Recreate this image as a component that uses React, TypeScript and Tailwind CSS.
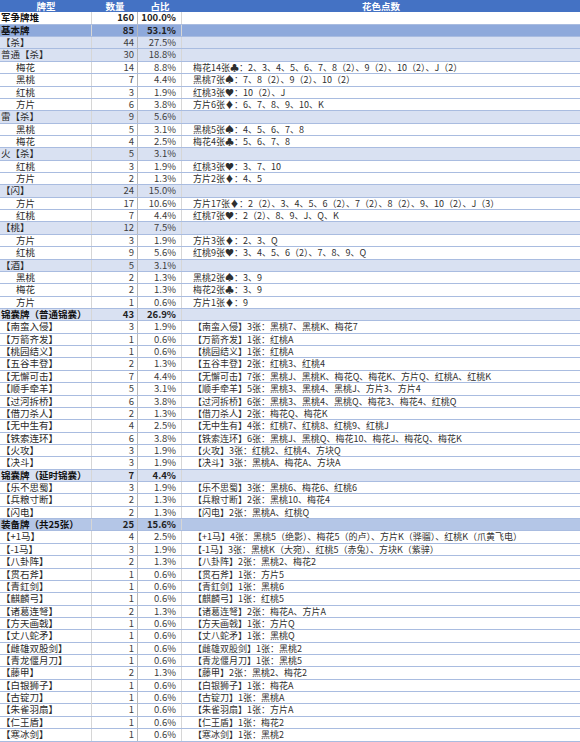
// 军争牌堆统计表：Excel 风格的牌型 / 数量 / 占比 / 花色点数表格
type Kind = "top" | "main" | "group" | "sub" | "item" | "equip";

type Row = {
  label: string;
  count: number;
  pct: string;
  detail?: string;
  kind: Kind;
};

const rows: Row[] = [
  { label: "军争牌堆", count: 160, pct: "100.0%", kind: "top" },
  { label: "基本牌", count: 85, pct: "53.1%", kind: "main" },
  { label: "【杀】", count: 44, pct: "27.5%", kind: "group" },
  { label: "普通【杀】", count: 30, pct: "18.8%", kind: "group" },
  { label: "梅花", count: 14, pct: "8.8%", detail: "梅花14张♣：2、3、4、5、6、7、8（2）、9（2）、10（2）、J（2）", kind: "sub" },
  { label: "黑桃", count: 7, pct: "4.4%", detail: "黑桃7张♠：7、8（2）、9（2）、10（2）", kind: "sub" },
  { label: "红桃", count: 3, pct: "1.9%", detail: "红桃3张♥：10（2）、J", kind: "sub" },
  { label: "方片", count: 6, pct: "3.8%", detail: "方片6张♦：6、7、8、9、10、K", kind: "sub" },
  { label: "雷【杀】", count: 9, pct: "5.6%", kind: "group" },
  { label: "黑桃", count: 5, pct: "3.1%", detail: "黑桃5张♠：4、5、6、7、8", kind: "sub" },
  { label: "梅花", count: 4, pct: "2.5%", detail: "梅花4张♣：5、6、7、8", kind: "sub" },
  { label: "火【杀】", count: 5, pct: "3.1%", kind: "group" },
  { label: "红桃", count: 3, pct: "1.9%", detail: "红桃3张♥：3、7、10", kind: "sub" },
  { label: "方片", count: 2, pct: "1.3%", detail: "方片2张♦：4、5", kind: "sub" },
  { label: "【闪】", count: 24, pct: "15.0%", kind: "group" },
  { label: "方片", count: 17, pct: "10.6%", detail: "方片17张♦：2（2）、3、4、5、6（2）、7（2）、8（2）、9、10（2）、J（3）", kind: "sub" },
  { label: "红桃", count: 7, pct: "4.4%", detail: "红桃7张♥：2（2）、8、9、J、Q、K", kind: "sub" },
  { label: "【桃】", count: 12, pct: "7.5%", kind: "group" },
  { label: "方片", count: 3, pct: "1.9%", detail: "方片3张♦：2、3、Q", kind: "sub" },
  { label: "红桃", count: 9, pct: "5.6%", detail: "红桃9张♥：3、4、5、6（2）、7、8、9、Q", kind: "sub" },
  { label: "【酒】", count: 5, pct: "3.1%", kind: "group" },
  { label: "黑桃", count: 2, pct: "1.3%", detail: "黑桃2张♠：3、9", kind: "sub" },
  { label: "梅花", count: 2, pct: "1.3%", detail: "梅花2张♣：3、9", kind: "sub" },
  { label: "方片", count: 1, pct: "0.6%", detail: "方片1张♦：9", kind: "sub" },
  { label: "锦囊牌（普通锦囊）", count: 43, pct: "26.9%", kind: "group" },
  { label: "【南蛮入侵】", count: 3, pct: "1.9%", detail: "【南蛮入侵】3张：黑桃7、黑桃K、梅花7", kind: "item" },
  { label: "【万箭齐发】", count: 1, pct: "0.6%", detail: "【万箭齐发】1张：红桃A", kind: "item" },
  { label: "【桃园结义】", count: 1, pct: "0.6%", detail: "【桃园结义】1张：红桃A", kind: "item" },
  { label: "【五谷丰登】", count: 2, pct: "1.3%", detail: "【五谷丰登】2张：红桃3、红桃4", kind: "item" },
  { label: "【无懈可击】", count: 7, pct: "4.4%", detail: "【无懈可击】7张：黑桃J、黑桃K、梅花Q、梅花K、方片Q、红桃A、红桃K", kind: "item" },
  { label: "【顺手牵羊】", count: 5, pct: "3.1%", detail: "【顺手牵羊】5张：黑桃3、黑桃4、黑桃J、方片3、方片4", kind: "item" },
  { label: "【过河拆桥】", count: 6, pct: "3.8%", detail: "【过河拆桥】6张：黑桃3、黑桃4、黑桃Q、梅花3、梅花4、红桃Q", kind: "item" },
  { label: "【借刀杀人】", count: 2, pct: "1.3%", detail: "【借刀杀人】2张：梅花Q、梅花K", kind: "item" },
  { label: "【无中生有】", count: 4, pct: "2.5%", detail: "【无中生有】4张：红桃7、红桃8、红桃9、红桃J", kind: "item" },
  { label: "【铁索连环】", count: 6, pct: "3.8%", detail: "【铁索连环】6张：黑桃J、黑桃Q、梅花10、梅花J、梅花Q、梅花K", kind: "item" },
  { label: "【火攻】", count: 3, pct: "1.9%", detail: "【火攻】3张：红桃2、红桃4、方块Q", kind: "item" },
  { label: "【决斗】", count: 3, pct: "1.9%", detail: "【决斗】3张：黑桃A、梅花A、方块A", kind: "item" },
  { label: "锦囊牌（延时锦囊）", count: 7, pct: "4.4%", kind: "group" },
  { label: "【乐不思蜀】", count: 3, pct: "1.9%", detail: "【乐不思蜀】3张：黑桃6、梅花6、红桃6", kind: "item" },
  { label: "【兵粮寸断】", count: 2, pct: "1.3%", detail: "【兵粮寸断】2张：黑桃10、梅花4", kind: "item" },
  { label: "【闪电】", count: 2, pct: "1.3%", detail: "【闪电】2张：黑桃A、红桃Q", kind: "item" },
  { label: "装备牌（共25张）", count: 25, pct: "15.6%", kind: "equip" },
  { label: "【+1马】", count: 4, pct: "2.5%", detail: "【+1马】4张：黑桃5（绝影）、梅花5（的卢）、方片K（骅骝）、红桃K（爪黄飞电）", kind: "item" },
  { label: "【-1马】", count: 3, pct: "1.9%", detail: "【-1马】3张：黑桃K（大宛）、红桃5（赤兔）、方块K（紫骍）", kind: "item" },
  { label: "【八卦阵】", count: 2, pct: "1.3%", detail: "【八卦阵】2张：黑桃2、梅花2", kind: "item" },
  { label: "【贯石斧】", count: 1, pct: "0.6%", detail: "【贯石斧】1张：方片5", kind: "item" },
  { label: "【青釭剑】", count: 1, pct: "0.6%", detail: "【青釭剑】1张：黑桃6", kind: "item" },
  { label: "【麒麟弓】", count: 1, pct: "0.6%", detail: "【麒麟弓】1张：红桃5", kind: "item" },
  { label: "【诸葛连弩】", count: 2, pct: "1.3%", detail: "【诸葛连弩】2张：梅花A、方片A", kind: "item" },
  { label: "【方天画戟】", count: 1, pct: "0.6%", detail: "【方天画戟】1张：方片Q", kind: "item" },
  { label: "【丈八蛇矛】", count: 1, pct: "0.6%", detail: "【丈八蛇矛】1张：黑桃Q", kind: "item" },
  { label: "【雌雄双股剑】", count: 1, pct: "0.6%", detail: "【雌雄双股剑】1张：黑桃2", kind: "item" },
  { label: "【青龙偃月刀】", count: 1, pct: "0.6%", detail: "【青龙偃月刀】1张：黑桃5", kind: "item" },
  { label: "【藤甲】", count: 2, pct: "1.3%", detail: "【藤甲】2张：黑桃2、梅花2", kind: "item" },
  { label: "【白银狮子】", count: 1, pct: "0.6%", detail: "【白银狮子】1张：梅花A", kind: "item" },
  { label: "【古锭刀】", count: 1, pct: "0.6%", detail: "【古锭刀】1张：黑桃A", kind: "item" },
  { label: "【朱雀羽扇】", count: 1, pct: "0.6%", detail: "【朱雀羽扇】1张：方片A", kind: "item" },
  { label: "【仁王盾】", count: 1, pct: "0.6%", detail: "【仁王盾】1张：梅花2", kind: "item" },
  { label: "【寒冰剑】", count: 1, pct: "0.6%", detail: "【寒冰剑】1张：黑桃2", kind: "item" },
];

const bgByKind: Record<Kind, string> = {
  top: "bg-white",
  main: "bg-[#8ea9db]",
  group: "bg-[#d9e1f2]",
  sub: "bg-white",
  item: "bg-white",
  equip: "bg-[#b4c6e7]",
};

function isBold(row: Row) {
  return row.kind === "top" || row.kind === "main" || row.kind === "equip" || row.label.startsWith("锦囊牌");
}

function TableRow({ row }: { row: Row }) {
  const bold = isBold(row);
  const num = bold ? "font-bold text-[#222]" : "text-[#3d3d3d]";
  return (
    <div
      className={`grid h-[12.37px] grid-cols-[92px_46px_44px_1fr] border-b border-[#a9bce0] leading-[11.37px] ${bgByKind[row.kind]}`}
    >
      <div
        className={`whitespace-nowrap border-r border-[#d6d6d6] ${row.kind === "sub" ? "pl-[16px]" : "pl-px"} ${
          bold ? "font-bold text-[#111]" : "text-[#2b2b2b]"
        }`}
      >
        {row.label}
      </div>
      <div className={`border-r border-[#b9b9b9] pr-[3px] text-right ${num}`}>{row.count}</div>
      <div className={`border-r border-[#d6d6d6] pr-[5px] text-right ${num}`}>{row.pct}</div>
      <div className="whitespace-nowrap pl-[11px] text-[9px] text-[#2f2f2f]">{row.detail ?? ""}</div>
    </div>
  );
}

export default function App() {
  return (
    <div className="h-[742px] w-[580px] overflow-hidden bg-white font-['Noto_Sans_CJK_SC','Noto_Sans',sans-serif] text-[9.5px]">
      <div className="grid h-[12.37px] grid-cols-[92px_46px_44px_1fr] bg-[#4472c4] text-center font-bold leading-[12.37px] text-white">
        <div>牌型</div>
        <div>数量</div>
        <div>占比</div>
        <div>花色点数</div>
      </div>
      {rows.map((row, i) => (
        <TableRow key={i} row={row} />
      ))}
    </div>
  );
}
